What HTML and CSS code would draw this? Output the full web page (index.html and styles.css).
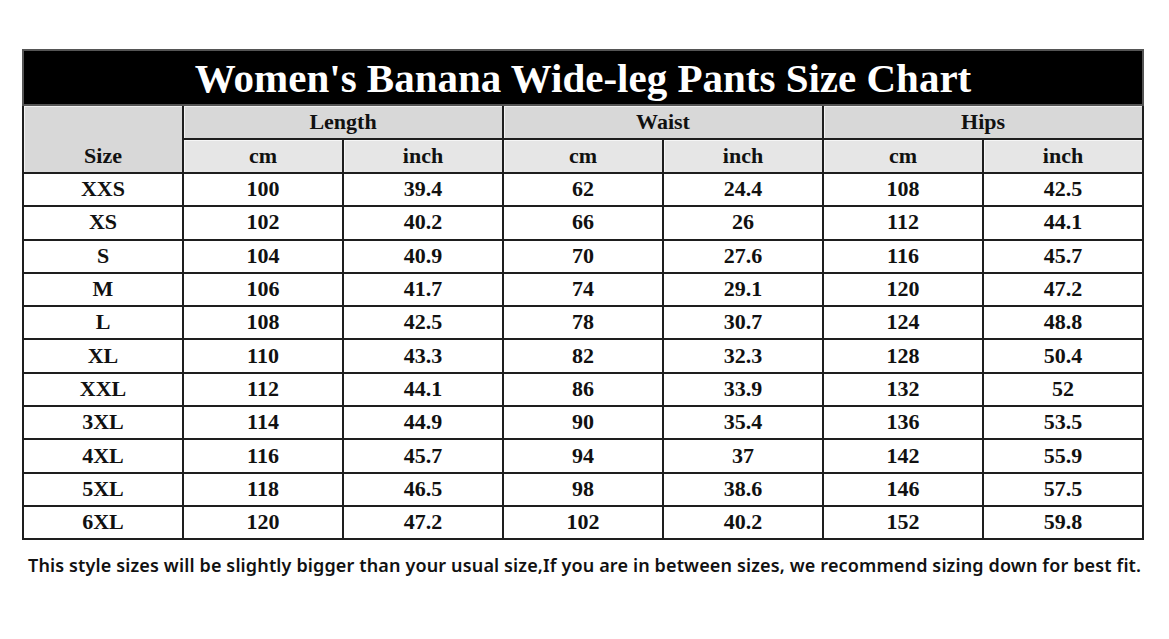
FILE: index.html
```html
<!DOCTYPE html>
<html>
<head>
<meta charset="utf-8">
<link rel="stylesheet" href="styles.css">
</head>
<body>
<div class="page">
  <table class="chart">
    <colgroup>
      <col class="c"><col class="c"><col class="c"><col class="c"><col class="c"><col class="c"><col class="c">
    </colgroup>
    <thead>
      <tr class="title-row"><th colspan="7" class="title">Women's Banana Wide-leg Pants Size Chart</th></tr>
      <tr class="group-row">
        <th rowspan="2" class="size-head">Size</th>
        <th colspan="2" class="group">Length</th>
        <th colspan="2" class="group">Waist</th>
        <th colspan="2" class="group">Hips</th>
      </tr>
      <tr class="unit-row">
        <th class="unit">cm</th><th class="unit">inch</th>
        <th class="unit">cm</th><th class="unit">inch</th>
        <th class="unit">cm</th><th class="unit">inch</th>
      </tr>
    </thead>
    <tbody>
      <tr><td>XXS</td><td>100</td><td>39.4</td><td>62</td><td>24.4</td><td>108</td><td>42.5</td></tr>
      <tr><td>XS</td><td>102</td><td>40.2</td><td>66</td><td>26</td><td>112</td><td>44.1</td></tr>
      <tr><td>S</td><td>104</td><td>40.9</td><td>70</td><td>27.6</td><td>116</td><td>45.7</td></tr>
      <tr><td>M</td><td>106</td><td>41.7</td><td>74</td><td>29.1</td><td>120</td><td>47.2</td></tr>
      <tr><td>L</td><td>108</td><td>42.5</td><td>78</td><td>30.7</td><td>124</td><td>48.8</td></tr>
      <tr><td>XL</td><td>110</td><td>43.3</td><td>82</td><td>32.3</td><td>128</td><td>50.4</td></tr>
      <tr><td>XXL</td><td>112</td><td>44.1</td><td>86</td><td>33.9</td><td>132</td><td>52</td></tr>
      <tr><td>3XL</td><td>114</td><td>44.9</td><td>90</td><td>35.4</td><td>136</td><td>53.5</td></tr>
      <tr><td>4XL</td><td>116</td><td>45.7</td><td>94</td><td>37</td><td>142</td><td>55.9</td></tr>
      <tr><td>5XL</td><td>118</td><td>46.5</td><td>98</td><td>38.6</td><td>146</td><td>57.5</td></tr>
      <tr><td>6XL</td><td>120</td><td>47.2</td><td>102</td><td>40.2</td><td>152</td><td>59.8</td></tr>
    </tbody>
  </table>
  <p class="note">This style sizes will be slightly bigger than your usual size,If you are in between sizes, we recommend sizing down for best fit.</p>
</div>
</body>
</html>
```

FILE: styles.css
```css
html, body {
  margin: 0;
  padding: 0;
  background: #ffffff;
}

.page {
  padding: 49px 0 0 22px;
}

.chart {
  border-collapse: collapse;
  table-layout: fixed;
  width: 1121px;
  font-family: "Liberation Serif", "Times New Roman", serif;
  font-weight: bold;
  color: #111111;
}

.c {
  width: 160px;
}

.chart th,
.chart td {
  border: 2px solid #1e1e1e;
  padding: 0 0 1px 0;
  text-align: center;
  vertical-align: middle;
  font-size: 22px;
  line-height: 1;
}

.title-row {
  height: 55px;
}

.chart .title {
  background: #000000;
  color: #ffffff;
  font-size: 41px;
  border-color: #555555;
  padding-top: 2px;
}

.group-row,
.unit-row {
  height: 34px;
}

.chart .size-head,
.chart .group {
  background: #d8d8d8;
  box-shadow: inset 1px 1px 0 #f2f2f2;
}

.chart .size-head {
  vertical-align: bottom;
  padding-bottom: 5px;
}

.chart .unit {
  background: #e6e6e6;
  box-shadow: inset 1px 1px 0 #f6f6f6;
}

.chart tbody tr {
  height: 33.3px;
}

.note {
  margin: 13px 0 0 6px;
  font-family: "Noto Sans", "Open Sans", sans-serif;
  font-weight: 600;
  font-size: 18px;
  letter-spacing: 0.14px;
  color: #111111;
  white-space: nowrap;
}
```
